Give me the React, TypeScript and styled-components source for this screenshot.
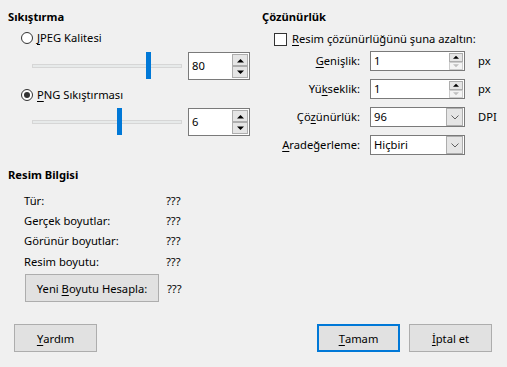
import { Fragment } from 'react';
import styled, { createGlobalStyle } from 'styled-components';

const GlobalStyle = createGlobalStyle`
  html, body {
    margin: 0;
    padding: 0;
    background: #f0f0f0;
  }
  body {
    font-family: 'Noto Sans', 'Segoe UI', sans-serif;
    font-size: 11.2px;
    color: #000;
  }
`;

const Dialog = styled.div`
  width: 507px;
  height: 367px;
  box-sizing: border-box;
  background: #f0f0f0;
  padding: 9px 0 0 8px;
  display: flex;
  flex-direction: column;
`;

const TopGrid = styled.div`
  display: grid;
  grid-template-columns: 254px 1fr;
`;

const Column = styled.div`
  display: flex;
  flex-direction: column;
`;

const Heading = styled.div`
  font-weight: 700;
  line-height: 16px;
  height: 16px;
`;

const Mn = styled.span`
  text-decoration: underline;
  text-underline-offset: 2px;
  text-decoration-thickness: 1px;
`;

const OptionRow = styled.label<{ $top: number; $indent: number }>`
  display: flex;
  align-items: center;
  gap: 4px;
  height: 16px;
  line-height: 16px;
  margin-top: ${(p) => p.$top}px;
  padding-left: ${(p) => p.$indent}px;
  white-space: nowrap;
`;

const Radio = styled.span<{ $checked?: boolean }>`
  width: 12px;
  height: 12px;
  box-sizing: border-box;
  border: 1px solid #333;
  border-radius: 50%;
  background: #fff;
  display: flex;
  align-items: center;
  justify-content: center;
  &::after {
    content: '';
    width: 6px;
    height: 6px;
    border-radius: 50%;
    background: ${(p) => (p.$checked ? '#333' : 'transparent')};
  }
`;

const Checkbox = styled.span`
  width: 13px;
  height: 13px;
  box-sizing: border-box;
  border: 1px solid #333;
  background: #fff;
  margin-right: 1px;
`;

const SliderRow = styled.div<{ $top: number }>`
  display: flex;
  align-items: center;
  height: 28px;
  margin-top: ${(p) => p.$top}px;
  padding-left: 24px;
  gap: 6px;
`;

const Track = styled.div`
  position: relative;
  width: 150px;
  height: 28px;
  &::before {
    content: '';
    position: absolute;
    left: 0;
    right: 0;
    top: 12px;
    height: 4px;
    box-sizing: border-box;
    background: #e7eaea;
    border: 1px solid #d6d6d6;
  }
`;

const Thumb = styled.div`
  position: absolute;
  top: 0;
  width: 5px;
  height: 27px;
  background: #0078d7;
`;

const Box = styled.div<{ $w: number; $h: number }>`
  width: ${(p) => p.$w}px;
  height: ${(p) => p.$h}px;
  box-sizing: border-box;
  border: 1px solid #7a7a7a;
  background: #fff;
  display: flex;
  align-items: center;
  padding: 0 1px 0 3px;
`;

const BoxText = styled.span`
  flex: 1;
  line-height: 16px;
`;

const SpinCol = styled.div`
  display: flex;
  flex-direction: column;
  justify-content: center;
`;

const SpinBtn = styled.div<{ $w: number; $h: number; $disabled?: boolean }>`
  width: ${(p) => p.$w}px;
  height: ${(p) => p.$h}px;
  box-sizing: border-box;
  border: 1px solid ${(p) => (p.$disabled ? '#cccccc' : '#adadad')};
  background: ${(p) => (p.$disabled ? '#f4f4f4' : '#e5e5e5')};
  display: flex;
  align-items: center;
  justify-content: center;
  color: ${(p) => (p.$disabled ? '#bfbfbf' : '#000')};
`;

const DropBtn = styled.div`
  width: 17px;
  height: 18px;
  box-sizing: border-box;
  border: 1px solid #adadad;
  background: #e5e5e5;
  display: flex;
  align-items: center;
  justify-content: center;
`;

const FormGrid = styled.div`
  display: grid;
  grid-template-columns: 98px 95px auto;
  column-gap: 10px;
  row-gap: 8px;
  margin-top: 4px;
  align-items: center;
`;

const FieldLabel = styled.div`
  text-align: right;
  line-height: 20px;
  white-space: nowrap;
`;

const Unit = styled.div`
  padding-left: 3px;
  line-height: 20px;
`;

const InfoSection = styled.div`
  display: flex;
  flex-direction: column;
  margin-top: 12px;
`;

const InfoGrid = styled.div`
  display: grid;
  grid-template-columns: 142px auto;
  padding-left: 16px;
  margin-top: 7px;
  grid-auto-rows: 20.3px;
  align-items: center;
`;

const CalcRow = styled.div`
  display: flex;
  align-items: center;
  gap: 8px;
  margin-top: 3px;
  padding-left: 17px;
`;

const Button = styled.button<{ $w: number; $h: number; $default?: boolean }>`
  width: ${(p) => p.$w}px;
  height: ${(p) => p.$h}px;
  box-sizing: border-box;
  margin: 0;
  padding: 0;
  font-family: inherit;
  font-size: 11.2px;
  color: #000;
  background: #e1e1e1;
  border: ${(p) => (p.$default ? '2px solid #0078d7' : '1px solid #adadad')};
  display: flex;
  align-items: center;
  justify-content: center;
`;

const ButtonBar = styled.div`
  display: flex;
  align-items: center;
  margin-top: 22px;
  padding: 0 15px 0 6px;
  gap: 9px;
`;

const Spacer = styled.div`
  flex: 1;
`;

const Up = ({ size = 5 }: { size?: number }) => (
  <svg width={size + 2} height={size} viewBox="0 0 7 4">
    <polygon points="0,4 7,4 3.5,0.5" fill="currentColor" />
  </svg>
);

const Down = ({ size = 5 }: { size?: number }) => (
  <svg width={size + 2} height={size} viewBox="0 0 7 4">
    <polygon points="0,0 7,0 3.5,3.5" fill="currentColor" />
  </svg>
);

const Chevron = () => (
  <svg width="8" height="5" viewBox="0 0 8 5">
    <polyline points="0.5,0.5 4,4 7.5,0.5" fill="none" stroke="#606060" strokeWidth="1" />
  </svg>
);

const SliderSpin = ({ value, max, top }: { value: number; max: number; top: number }) => (
  <SliderRow $top={top}>
    <Track>
      <Thumb style={{ left: `${(value / max) * 145 - 2}px` }} />
    </Track>
    <Box $w={62} $h={28}>
      <BoxText>{value}</BoxText>
      <SpinCol>
        <SpinBtn $w={16} $h={12}>
          <Up />
        </SpinBtn>
        <SpinBtn $w={16} $h={12}>
          <Down />
        </SpinBtn>
      </SpinCol>
    </Box>
  </SliderRow>
);

const FieldSpin = ({ value }: { value: string }) => (
  <Box $w={95} $h={20}>
    <BoxText>{value}</BoxText>
    <SpinCol>
      <SpinBtn $w={14} $h={9}>
        <Up size={4} />
      </SpinBtn>
      <SpinBtn $w={14} $h={8} $disabled>
        <Down size={4} />
      </SpinBtn>
    </SpinCol>
  </Box>
);

const FieldDrop = ({ value }: { value: string }) => (
  <Box $w={95} $h={20}>
    <BoxText>{value}</BoxText>
    <DropBtn>
      <Chevron />
    </DropBtn>
  </Box>
);

const info = ['Tür:', 'Gerçek boyutlar:', 'Görünür boyutlar:', 'Resim boyutu:'];

export default function App() {
  return (
    <>
      <GlobalStyle />
      <Dialog>
        <TopGrid>
          <Column>
            <Heading>Sıkıştırma</Heading>
            <OptionRow $top={5} $indent={13}>
              <Radio />
              <span>
                <Mn>J</Mn>PEG Kalitesi
              </span>
            </OptionRow>
            <SliderSpin value={80} max={100} top={6} />
            <OptionRow $top={7} $indent={13}>
              <Radio $checked />
              <span>
                <Mn>P</Mn>NG Sıkıştırması
              </span>
            </OptionRow>
            <SliderSpin value={6} max={10} top={5} />
          </Column>
          <Column>
            <Heading>Çözünürlük</Heading>
            <OptionRow $top={6} $indent={12}>
              <Checkbox />
              <span>
                <Mn>R</Mn>esim çözünürlüğünü şuna azaltın:
              </span>
            </OptionRow>
            <FormGrid>
              <FieldLabel>
                <Mn>G</Mn>enişlik:
              </FieldLabel>
              <FieldSpin value="1" />
              <Unit>px</Unit>
              <FieldLabel>
                Yü<Mn>k</Mn>seklik:
              </FieldLabel>
              <FieldSpin value="1" />
              <Unit>px</Unit>
              <FieldLabel>
                Çö<Mn>z</Mn>ünürlük:
              </FieldLabel>
              <FieldDrop value="96" />
              <Unit>DPI</Unit>
              <FieldLabel>
                <Mn>A</Mn>radeğerleme:
              </FieldLabel>
              <FieldDrop value="Hiçbiri" />
              <Unit />
            </FormGrid>
          </Column>
        </TopGrid>
        <InfoSection>
          <Heading>Resim Bilgisi</Heading>
          <InfoGrid>
            {info.map((label) => (
              <Fragment key={label}>
                <span>{label}</span>
                <span>???</span>
              </Fragment>
            ))}
          </InfoGrid>
          <CalcRow>
            <Button $w={134} $h={28}>
              Yeni&nbsp;<Mn>B</Mn>oyutu Hesapla:
            </Button>
            <span>???</span>
          </CalcRow>
        </InfoSection>
        <ButtonBar>
          <Button $w={83} $h={28}>
            <Mn>Y</Mn>ardım
          </Button>
          <Spacer />
          <Button $w={83} $h={28} $default>
            <Mn>T</Mn>amam
          </Button>
          <Button $w={83} $h={28}>
            <Mn>İ</Mn>ptal et
          </Button>
        </ButtonBar>
      </Dialog>
    </>
  );
}
